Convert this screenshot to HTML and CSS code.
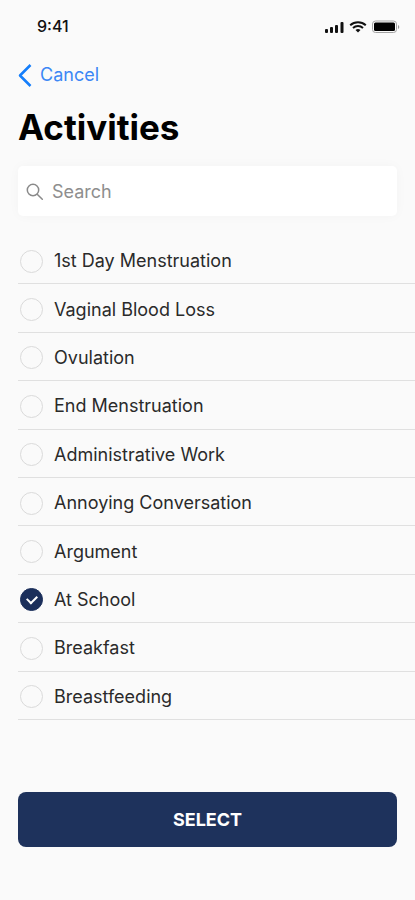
FILE: index.html
```html
<!DOCTYPE html>
<html lang="en">
<head>
<meta charset="utf-8">
<meta name="viewport" content="width=device-width, initial-scale=1">
<title>Activities</title>
<link rel="stylesheet" href="styles.css">
</head>
<body>
<div class="status">
  <span class="status-time">9:41</span>
  <svg class="status-icons" width="76" height="16" viewBox="0 0 76 16" aria-hidden="true">
    <g fill="#111">
      <rect x="1" y="11" width="3" height="4" rx="1"/>
      <rect x="6" y="9" width="3" height="6" rx="1"/>
      <rect x="11" y="7" width="3" height="8" rx="1"/>
      <rect x="16.500" y="4" width="3" height="11" rx="1"/>
    </g>
    <g fill="none" stroke="#111" stroke-width="2">
      <path d="M26.200 7.200a11.500 11.500 0 0 1 15.600 0"/>
      <path d="M29 10a7.500 7.500 0 0 1 10 0"/>
    </g>
    <path d="M31.500 12a3.800 3.800 0 0 1 5 0L34 14.500z" fill="#111"/>
    <rect x="48.500" y="3" width="24" height="11.500" rx="3" fill="none" stroke="#a3a3a3"/>
    <rect x="50" y="4.500" width="21" height="8.500" rx="1.500" fill="#000"/>
    <path d="M74 7v4a2.200 2.200 0 0 0 0-4z" fill="#999"/>
  </svg>
</div>
<header class="header">
  <a class="back" href="#">
    <svg width="14" height="24" viewBox="0 0 14 24" aria-hidden="true"><path d="M12.500 2L2 12.500L12.500 23" fill="none" stroke="#147efb" stroke-width="2.500" stroke-linejoin="round"/></svg>
    Cancel
  </a>
  <h1 class="title">Activities</h1>
</header>
<form class="form">
  <label class="search">
    <svg width="18" height="18" viewBox="0 0 18 18" aria-hidden="true"><g fill="none" stroke="#8a8a8a" stroke-width="1.500" stroke-linecap="round"><circle cx="7" cy="7" r="5.700"/><path d="M11.200 11.200L16.300 16.300"/></g></svg>
    <input class="search-input" type="search" placeholder="Search" aria-label="Search">
  </label>
  <div class="list" role="radiogroup" aria-label="Activities">
    <label class="row"><input class="radio" type="radio" name="activity"><span>1st Day Menstruation</span></label>
    <label class="row"><input class="radio" type="radio" name="activity"><span>Vaginal Blood Loss</span></label>
    <label class="row"><input class="radio" type="radio" name="activity"><span>Ovulation</span></label>
    <label class="row"><input class="radio" type="radio" name="activity"><span>End Menstruation</span></label>
    <label class="row"><input class="radio" type="radio" name="activity"><span>Administrative Work</span></label>
    <label class="row"><input class="radio" type="radio" name="activity"><span>Annoying Conversation</span></label>
    <label class="row"><input class="radio" type="radio" name="activity"><span>Argument</span></label>
    <label class="row"><input class="radio" type="radio" name="activity" checked><span>At School</span></label>
    <label class="row"><input class="radio" type="radio" name="activity"><span>Breakfast</span></label>
    <label class="row"><input class="radio" type="radio" name="activity"><span>Breastfeeding</span></label>
  </div>
  <button class="select" type="button">SELECT</button>
</form>
</body>
</html>
```
FILE: styles.css
```css
* {
  box-sizing: border-box;
}

body {
  margin: 0;
  min-height: 100vh;
  display: flex;
  flex-direction: column;
  background: #fafafa;
  color: #2a2a2a;
  font-family: Inter, "Liberation Sans", sans-serif;
  font-size: 18px;
  line-height: 24px;
}

.status {
  display: flex;
  align-items: center;
  justify-content: space-between;
  padding: 14px 15px 0 37px;
}

.status-time {
  font-size: 16px;
  font-weight: 500;
  color: #111;
}

.header {
  padding: 25px 18px 0;
}

.back {
  display: flex;
  align-items: center;
  gap: 8px;
  width: max-content;
  color: #3c87f5;
  text-decoration: none;
}

.title {
  margin: 18px 0 0;
  font-size: 35px;
  line-height: 44px;
  font-weight: 700;
  color: #000;
}

.form {
  flex: 1;
  display: flex;
  flex-direction: column;
  padding: 17px 0 53px 18px;
}

.search {
  display: flex;
  align-items: center;
  gap: 8px;
  height: 50px;
  margin: 0 18px 20px 0;
  padding: 1px 8px 0;
  border-radius: 5px;
  background: #fff;
  box-shadow: 0 0 12px rgba(0, 0, 0, 0.03);
}

.search-input {
  flex: 1;
  min-width: 0;
  padding: 0;
  border: 0;
  outline: 0;
  background: none;
  font: inherit;
  color: inherit;
  appearance: none;
}

.search-input::placeholder {
  color: #8e8e8e;
  opacity: 1;
}

.list {
  flex: 1;
  display: grid;
  grid-auto-rows: 1fr;
}

.row {
  display: flex;
  align-items: center;
  gap: 11px;
  min-height: 44px;
  padding: 3px 0 0 2px;
  border-bottom: 1px solid #e0e0e0;
}

.radio {
  appearance: none;
  display: grid;
  place-items: center;
  width: 23px;
  height: 23px;
  margin: 0;
  border: 1px solid #dadada;
  border-radius: 50%;
}

.radio:checked {
  border-color: #1b2f5b;
  background: #1b2f5b;
}

.radio:checked::after {
  content: "";
  width: 8px;
  height: 5px;
  margin-bottom: 3px;
  border: solid #fff;
  border-width: 0 0 2px 2px;
  transform: rotate(-45deg);
}

.select {
  height: 55px;
  margin: 72px 18px 0 0;
  border: 0;
  border-radius: 8px;
  background: #1e325c;
  color: #fff;
  font: inherit;
  font-weight: 700;
}
```
